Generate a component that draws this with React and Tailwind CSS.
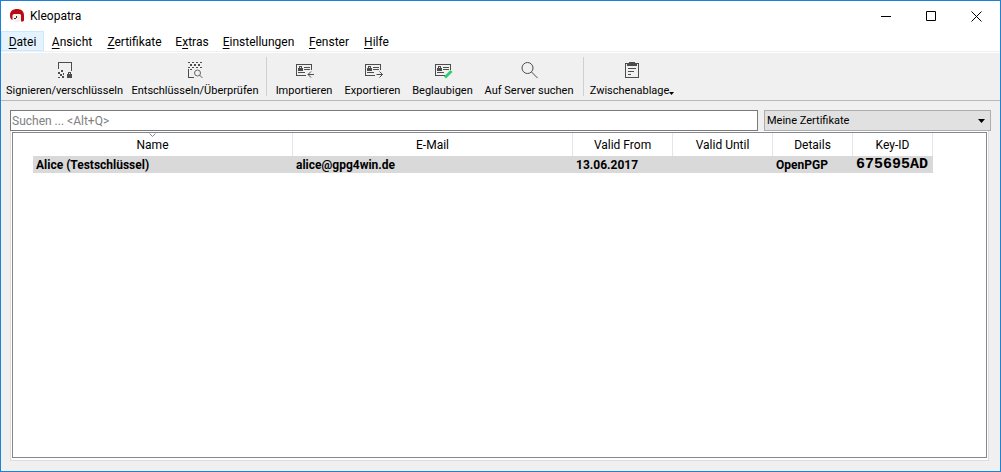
import React from "react";

const menus = [
  { key: "D", rest: "atei", width: "w-[43px]", active: true },
  { key: "A", rest: "nsicht", width: "w-[56px]" },
  { key: "Z", rest: "ertifikate", width: "w-[69px]" },
  { before: "E", key: "x", rest: "tras", width: "w-[46px]" },
  { key: "E", rest: "instellungen", width: "w-[87px]" },
  { key: "F", rest: "enster", width: "w-[54px]" },
  { key: "H", rest: "ilfe", width: "w-[41px]" },
];

function Icon({ children }) {
  return (
    <svg aria-hidden="true" width="22" height="22" viewBox="0 0 22 22" fill="none" stroke="#4d4d4d" shapeRendering="crispEdges" className="shrink-0">
      {children}
    </svg>
  );
}

function SignIcon() {
  return (
    <Icon>
      <path d="M4.5 10V3.5h13V12" />
      <path fill="#4d4d4d" stroke="none" d="M7 11h2v2H7zM4 13h2v2H4zM9 14h1v2H9zM6 15h2v2H6zM4 18h2v1H4zM8 17h2v2H8zM13 15h5v4h-5z" />
      <path d="M14.5 15v-1.5h2V15" />
    </Icon>
  );
}

function DecryptIcon() {
  return (
    <Icon>
      <path fill="#4d4d4d" stroke="none" d="M4 3h2v1H4zM8 3h2v1H8zM12 3h2v1h-2zM16 3h2v1h-2zM6 5h2v2H6zM10 5h2v2h-2zM14 5h2v2h-2zM4 8h2v1H4zM8 8h2v1H8zM12 8h2v1h-2zM16 8h2v1h-2z" />
      <path d="M4.5 10v8.500H10M6 10.500h2" />
      <g shapeRendering="auto" stroke="#666">
        <circle cx="13.500" cy="14" r="3" />
        <path d="M15.500 16l3 3" />
      </g>
    </Icon>
  );
}

function CardBase() {
  return (
    <>
      <path d="M13 16.500H3.500v-11h15V11" />
      <path d="M11 8.500h6M11 10.500h6M5 13.500h7" />
      <path fill="#4d4d4d" stroke="none" d="M5 9h5v3H5z" />
      <path d="M6.500 9V7.500h2V9" />
    </>
  );
}

function ImportIcon() {
  return (
    <Icon>
      <CardBase />
      <path shapeRendering="auto" d="M21 15.500h-6M18 12.500l-3 3 3 3" />
    </Icon>
  );
}

function ExportIcon() {
  return (
    <Icon>
      <CardBase />
      <path shapeRendering="auto" d="M14.500 15.500h6M17.500 12.500l3 3-3 3" />
    </Icon>
  );
}

function CertifyIcon() {
  return (
    <Icon>
      <CardBase />
      <path shapeRendering="auto" stroke="#2ecc71" strokeWidth="2.800" d="M13 18.500l6.500-6.500" />
    </Icon>
  );
}

function SearchIcon() {
  return (
    <Icon>
      <g shapeRendering="auto">
        <circle cx="9.500" cy="9" r="5.500" />
        <path d="M13.500 13l6 6" />
      </g>
    </Icon>
  );
}

function ClipboardIcon() {
  return (
    <Icon>
      <path d="M4.500 4.500h13v14h-13z" />
      <path fill="#4d4d4d" stroke="none" d="M8 3h6v1h2v3H6V4h2z" />
      <path d="M7 9.500h8M7 12.500h6M7 15.500h3" />
    </Icon>
  );
}

function ToolButton({ icon, label, width, menu }) {
  return (
    <button className={`flex shrink-0 flex-col items-center gap-0.5 pt-1.5 ${width}`}>
      {icon}
      <span className="flex items-end whitespace-nowrap">
        {label}
        {menu && (
          <svg aria-hidden="true" width="5" height="3" viewBox="0 0 5 3" className="mb-1">
            <path d="M0 0h5L2.500 3z" />
          </svg>
        )}
      </span>
    </button>
  );
}

function Separator() {
  return <div className="mx-[3px] my-1 w-px shrink-0 bg-[#d0d0d0]" />;
}

function TitleBar() {
  return (
    <header className="flex h-[30px] items-center pl-2">
      <svg aria-hidden="true" width="16" height="16" viewBox="0 0 16 16" className="mr-[5px]">
        <path fill="#b90c10" d="M8 1c4 0 7 2 7 6.500V12c0 1-.8 1.500-2 1.500h-1V7H4v5l-1.500-.5C1.300 10.500 1 9 1 7c0-4 3-6 7-6z" />
        <path fill="#f7efef" d="M3.500 7L5 6h6l1 1v5l-2 2H6l-2.500-2z" />
        <path fill="#303030" d="M5 10h2v1H5zM7 8h1v2H7z" />
      </svg>
      <h1 className="flex-1">Kleopatra</h1>
      <button aria-label="Minimieren" className="flex w-[45px] justify-center">
        <svg width="11" height="11" viewBox="0 0 11 11" stroke="#000"><path d="M1 5.500h10" /></svg>
      </button>
      <button aria-label="Maximieren" className="flex w-[45px] justify-center">
        <svg width="11" height="11" viewBox="0 0 11 11" stroke="#000" fill="none"><path d="M1.500.500h9v9h-9z" /></svg>
      </button>
      <button aria-label="Schließen" className="flex w-[47px] justify-center">
        <svg width="11" height="11" viewBox="0 0 11 11" stroke="#000"><path d="M.5.500l10 10M10.500.500l-10 10" /></svg>
      </button>
    </header>
  );
}

const th = "border-r border-[#e5e5e5] p-0 text-center font-normal";

export default function App() {
  return (
    <div className="flex min-h-screen flex-col border border-[#1883d7] bg-[#f0f0f0] font-[Roboto,'Open_Sans',sans-serif] text-[12px] leading-4 text-black">
      <div className="bg-white">
        <TitleBar />
        <nav className="flex h-5">
          {menus.map((m) => (
            <button
              key={m.key + m.rest}
              className={`shrink-0 whitespace-nowrap border pt-0.5 ${m.width} ${m.active ? "border-[#cce8ff] bg-[#e5f3ff]" : "border-transparent"}`}
            >
              {m.before}
              <span className="underline underline-offset-2">{m.key}</span>
              {m.rest}
            </button>
          ))}
        </nav>
        <div className="border-t border-b border-t-[#f0f0f0] border-b-white" />
      </div>

      <div role="toolbar" className="flex h-12 border-b border-[#b8b8b8] pl-px text-[11px]">
        <ToolButton icon={<SignIcon />} label="Signieren/verschlüsseln" width="w-[125px]" />
        <ToolButton icon={<DecryptIcon />} label="Entschlüsseln/Überprüfen" width="w-[136px]" />
        <Separator />
        <ToolButton icon={<ImportIcon />} label="Importieren" width="w-[68px]" />
        <ToolButton icon={<ExportIcon />} label="Exportieren" width="w-[69px]" />
        <ToolButton icon={<CertifyIcon />} label="Beglaubigen" width="w-[71px]" />
        <ToolButton icon={<SearchIcon />} label="Auf Server suchen" width="w-[102px]" />
        <Separator />
        <ToolButton icon={<ClipboardIcon />} label="Zwischenablage" width="w-[90px]" menu />
      </div>

      <main className="flex flex-1 flex-col pt-[9px] pr-[9px] pb-[10px] pl-[9px]">
        <div className="flex h-[21px] gap-1.5">
          <input
            type="text"
            aria-label="Suchen"
            placeholder="Suchen ... <Alt+Q>"
            className="min-w-0 flex-1 border border-[#7a7a7a] bg-white px-px outline-none placeholder:text-[#808080]"
          />
          <div className="grid w-[227px] items-center text-[11px]">
            <select
              aria-label="Zertifikatfilter"
              className="col-start-1 row-start-1 h-full w-full appearance-none border border-[#adadad] bg-[#e1e1e1] px-0.5 outline-none"
            >
              <option>Meine Zertifikate</option>
            </select>
            <svg aria-hidden="true" width="7" height="4" viewBox="0 0 7 4" className="pointer-events-none col-start-1 row-start-1 mr-[6px] justify-self-end">
              <path d="M0 0h7L3.500 4z" />
            </svg>
          </div>
        </div>

        <div className="mr-0.5 flex flex-1 flex-col border border-t-0 border-[#dcdcdc] bg-white p-px pb-0.5">
          <div className="flex-1 border border-[#828790] bg-white">
            <table className="w-[920px] table-fixed border-separate border-spacing-0">
              <colgroup>
                <col className="w-5" />
                <col className="w-[260px]" />
                <col className="w-[280px]" />
                <col className="w-[100px]" />
                <col className="w-[100px]" />
                <col className="w-[80px]" />
                <col className="w-[80px]" />
              </colgroup>
              <thead>
                <tr className="h-[23px]">
                  <th colSpan={2} aria-sort="ascending" className={th}>
                    <div className="flex h-[23px] flex-col items-center">
                      <svg aria-hidden="true" width="7" height="4" viewBox="0 0 7 4" fill="none" stroke="#888" className="shrink-0">
                        <path d="M.5.500l3 3 3-3" />
                      </svg>
                      Name
                    </div>
                  </th>
                  <th className={th}>E-Mail</th>
                  <th className={th}>Valid From</th>
                  <th className={th}>Valid Until</th>
                  <th className={th}>Details</th>
                  <th className={th}>Key-ID</th>
                </tr>
              </thead>
              <tbody>
                <tr className="h-[17px] font-bold">
                  <td className="p-0" />
                  <td className="bg-[#d9d9d9] p-0 pl-[3px]">Alice (Testschlüssel)</td>
                  <td className="bg-[#d9d9d9] p-0 pl-[3px]">alice@gpg4win.de</td>
                  <td className="bg-[#d9d9d9] p-0 pl-[3px]">13.06.2017</td>
                  <td className="bg-[#d9d9d9] p-0" />
                  <td className="bg-[#d9d9d9] p-0 pl-[3px]">OpenPGP</td>
                  <td className="bg-[#d9d9d9] p-0 pl-[3px] font-['Liberation_Mono',monospace] text-[15px] leading-4">675695AD</td>
                </tr>
              </tbody>
            </table>
          </div>
        </div>
      </main>
    </div>
  );
}
